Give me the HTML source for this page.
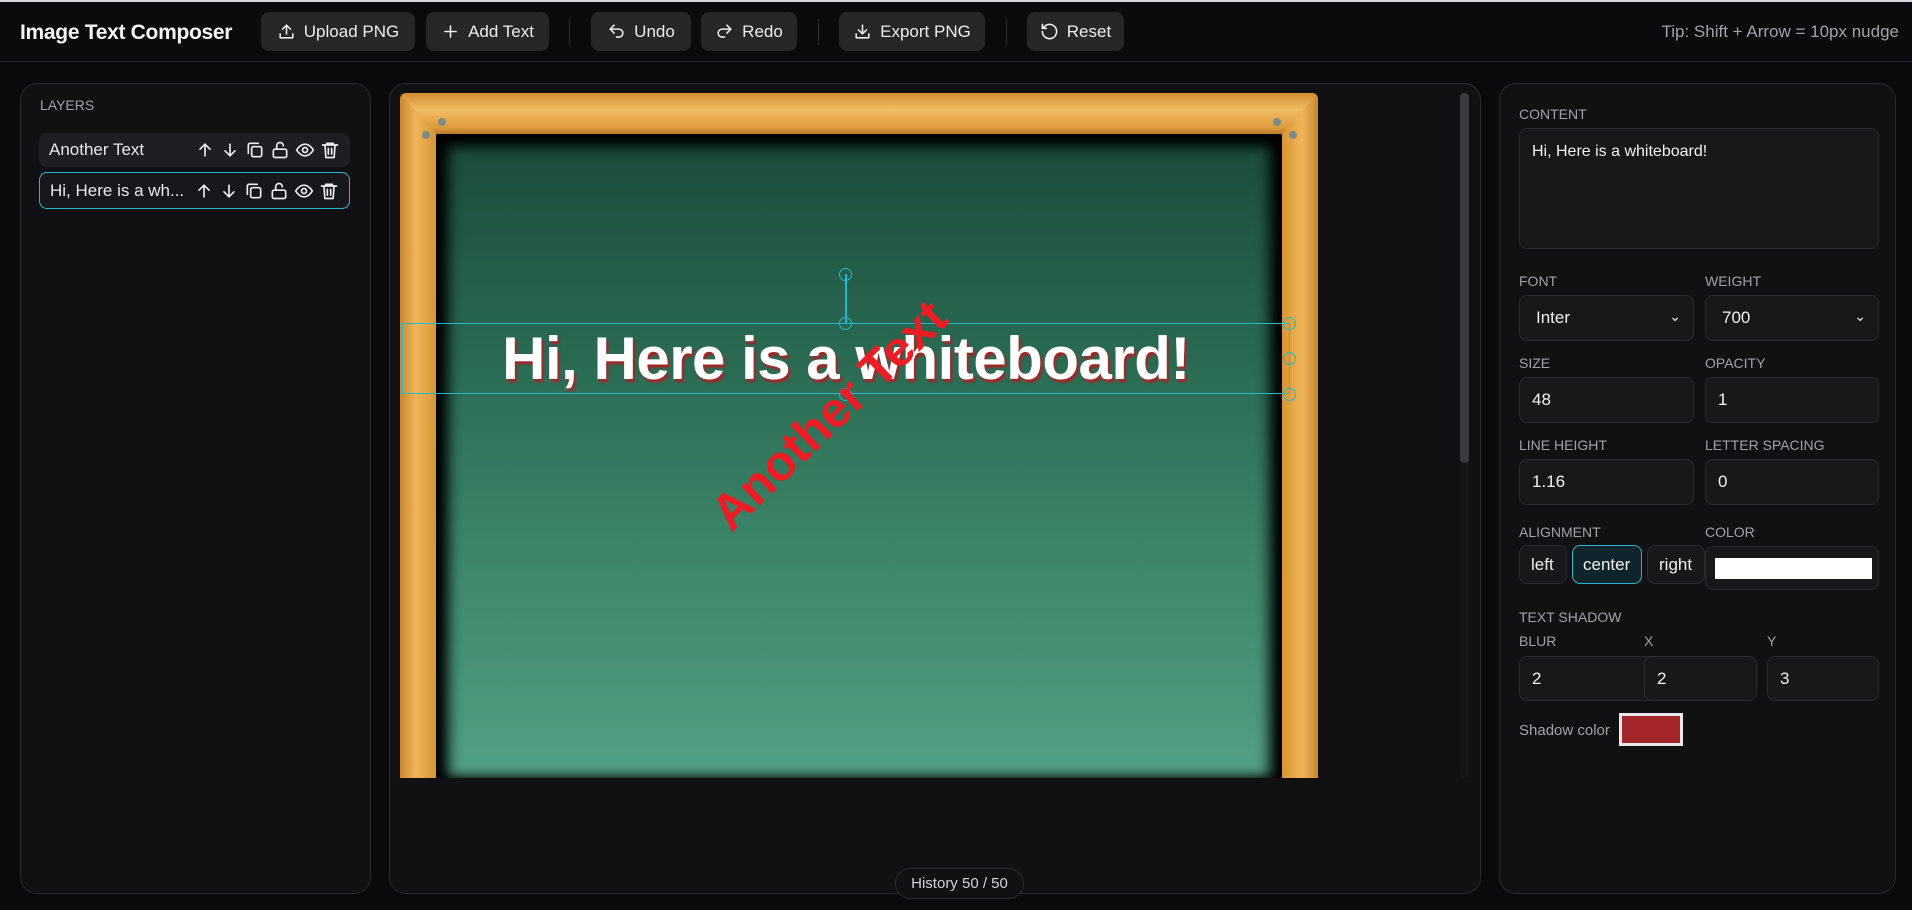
<!DOCTYPE html>
<html><head><meta charset="utf-8">
<style>
*{box-sizing:border-box;margin:0;padding:0}
body{width:1912px;height:910px;background:#0a0a0c;font-family:"Liberation Sans",sans-serif;color:#e8e8ea;position:relative;overflow:hidden}
.abs{position:absolute}
.topline{left:0;top:0;width:1912px;height:2px;background:#d8dadd}
.hdr{left:0;top:2px;width:1912px;height:60px;border-bottom:1px solid #26262a;background:#0b0b0d}
.title{left:20px;top:21px;font-size:21px;font-weight:bold;color:#f4f4f5;letter-spacing:-0.3px}
.btn{top:12px;height:39px;background:#27272a;border-radius:8px;color:#ececee;font-size:17px;display:flex;align-items:center;justify-content:center;gap:8px}
.btn svg{width:19px;height:19px;stroke:#ececee;fill:none;stroke-width:2;stroke-linecap:round;stroke-linejoin:round}
.sep{top:19px;width:1px;height:26px;background:#2e2e33}
.tip{right:13px;top:22px;font-size:17px;color:#a1a1aa}
.panel{top:83px;height:811px;background:#111114;border:1px solid #2a2a2f;border-radius:17px}
.lbl{font-size:14px;color:#a1a1aa;text-transform:uppercase}
.row{left:39px;width:311px;height:34px;background:#1f1f23;border-radius:8px;font-size:17px;display:flex;align-items:center;padding-left:10px}
.row .ic{position:absolute;right:10px;top:0;height:100%;display:flex;align-items:center;gap:5px}
.row svg{width:20px;height:20px;stroke:#ececee;fill:none;stroke-width:2;stroke-linecap:round;stroke-linejoin:round}
.inp{background:#18181b;border:1px solid #2c2c31;border-radius:8px;font-size:17px;color:#f0f0f2;display:flex;align-items:center;padding-left:12px}
.board{left:400px;top:93px;width:918px;height:685px;overflow:hidden;border-radius:6px 6px 0 0;background:#000}
.frameL{left:0;top:0;width:36px;height:100%;background:linear-gradient(90deg,#c98830,#f0b458 45%,#d69535)}
.frameR{right:0;top:0;width:36px;height:100%;background:linear-gradient(90deg,#d69535,#f0b458 55%,#c98830)}
.frameT{left:0;top:0;width:100%;height:41px;background:linear-gradient(180deg,#d08d2f,#f3bc62 40%,#dc9a3c 85%,#b87a28);clip-path:polygon(0 0,100% 0,calc(100% - 36px) 100%,36px 100%)}
.green{left:36px;top:41px;right:36px;bottom:0;background:linear-gradient(180deg,#1b4b3a 0%,#2a6a53 35%,#3d8669 65%,#52a083 100%);box-shadow:inset 0 14px 14px -2px #000,inset 14px 0 14px -2px #000,inset -14px 0 14px -2px #000}
.bolt{width:8px;height:8px;border-radius:50%;background:#7d8a86}
</style></head><body>
<div class="abs topline"></div>
<div class="abs hdr"></div>
<div class="abs title">Image Text Composer</div>

<div class="abs btn" style="left:261px;width:154px"><svg viewBox="0 0 24 24"><path d="M12 15V4M7 9l5-5 5 5M4 15v4a1 1 0 0 0 1 1h14a1 1 0 0 0 1-1v-4"/></svg>Upload PNG</div>
<div class="abs btn" style="left:426px;width:123px"><svg viewBox="0 0 24 24"><path d="M12 5v14M5 12h14"/></svg>Add Text</div>
<div class="abs sep" style="left:569px"></div>
<div class="abs btn" style="left:591px;width:100px"><svg viewBox="0 0 24 24"><path d="M9 14L4 9l5-5"/><path d="M4 9h11a5 5 0 0 1 5 5v0a5 5 0 0 1-5 5h-3"/></svg>Undo</div>
<div class="abs btn" style="left:701px;width:96px"><svg viewBox="0 0 24 24"><path d="M15 14l5-5-5-5"/><path d="M20 9H9a5 5 0 0 0-5 5v0a5 5 0 0 0 5 5h3"/></svg>Redo</div>
<div class="abs sep" style="left:818px"></div>
<div class="abs btn" style="left:839px;width:146px"><svg viewBox="0 0 24 24"><path d="M12 4v11M7 10l5 5 5-5M4 15v4a1 1 0 0 0 1 1h14a1 1 0 0 0 1-1v-4"/></svg>Export PNG</div>
<div class="abs sep" style="left:1006px"></div>
<div class="abs btn" style="left:1027px;width:97px"><svg viewBox="0 0 24 24"><path d="M3 12a9 9 0 1 0 3-6.7L3 8"/><path d="M3 3v5h5"/></svg>Reset</div>
<div class="abs tip">Tip: Shift + Arrow = 10px nudge</div>

<div class="abs panel" style="left:20px;width:351px"></div>
<div class="abs lbl" style="left:40px;top:97px">Layers</div>
<div class="abs row" style="top:133px">Another Text<div class="ic">
<svg viewBox="0 0 24 24"><path d="M12 19V5M6 11l6-6 6 6"/></svg><svg viewBox="0 0 24 24"><path d="M12 5v14M6 13l6 6 6-6"/></svg><svg viewBox="0 0 24 24"><rect x="8" y="8" width="12" height="12" rx="2"/><path d="M4 16V6a2 2 0 0 1 2-2h10"/></svg><svg viewBox="0 0 24 24"><rect x="4" y="11" width="16" height="10" rx="2"/><path d="M8 11V7a4 4 0 0 1 8 0"/></svg><svg viewBox="0 0 24 24"><path d="M2 12s4-7 10-7 10 7 10 7-4 7-10 7S2 12 2 12z"/><circle cx="12" cy="12" r="3"/></svg><svg viewBox="0 0 24 24"><path d="M3 6h18M8 6V4h8v2M6 6l1 15h10l1-15M10 10v7M14 10v7"/></svg></div></div>
<div class="abs row" style="top:172px;height:37px;border:1.5px solid #22b8cf;background:#18181c">Hi, Here is a wh...<div class="ic">
<svg viewBox="0 0 24 24"><path d="M12 19V5M6 11l6-6 6 6"/></svg><svg viewBox="0 0 24 24"><path d="M12 5v14M6 13l6 6 6-6"/></svg><svg viewBox="0 0 24 24"><rect x="8" y="8" width="12" height="12" rx="2"/><path d="M4 16V6a2 2 0 0 1 2-2h10"/></svg><svg viewBox="0 0 24 24"><rect x="4" y="11" width="16" height="10" rx="2"/><path d="M8 11V7a4 4 0 0 1 8 0"/></svg><svg viewBox="0 0 24 24"><path d="M2 12s4-7 10-7 10 7 10 7-4 7-10 7S2 12 2 12z"/><circle cx="12" cy="12" r="3"/></svg><svg viewBox="0 0 24 24"><path d="M3 6h18M8 6V4h8v2M6 6l1 15h10l1-15M10 10v7M14 10v7"/></svg></div></div>

<div class="abs panel" style="left:389px;width:1092px"></div>
<div class="abs" style="left:1460px;top:93px;width:9px;height:685px;background:#16161a;border-radius:4px"></div>
<div class="abs" style="left:1460px;top:93px;width:9px;height:370px;background:#3a3a40;border-radius:4px"></div>
<div class="abs board">
 <div class="abs green"></div>
 <div class="abs frameL"></div>
 <div class="abs frameR"></div>
 <div class="abs frameT"></div>
 <div class="abs bolt" style="left:38px;top:25px"></div>
 <div class="abs bolt" style="left:22px;top:38px"></div>
 <div class="abs bolt" style="left:873px;top:25px"></div>
 <div class="abs bolt" style="left:889px;top:38px"></div>
 <div class="abs" style="left:2px;top:230px;width:888px;height:71px;border:1.5px solid #22b8cf"></div>
 <div class="abs" style="left:445px;top:181px;width:1.5px;height:49px;background:#22b8cf"></div>
 <div class="abs" style="left:439px;top:175px;width:13px;height:13px;border:1.5px solid #22b8cf;border-radius:50%"></div>
 <div class="abs" style="left:439px;top:224px;width:13px;height:13px;border:1.5px solid #22b8cf;border-radius:50%"></div>
 <div class="abs" style="left:439px;top:295px;width:13px;height:13px;border:1.5px solid #22b8cf;border-radius:50%"></div>
 <div class="abs" style="left:883px;top:224px;width:13px;height:13px;border:1.5px solid #22b8cf;border-radius:50%"></div>
 <div class="abs" style="left:883px;top:259px;width:13px;height:13px;border:1.5px solid #22b8cf;border-radius:50%"></div>
 <div class="abs" style="left:883px;top:295px;width:13px;height:13px;border:1.5px solid #22b8cf;border-radius:50%"></div>
 <div class="abs" style="left:-30px;top:230px;width:952px;text-align:center;font-size:60px;font-weight:bold;color:#fff;text-shadow:2px 3px 2px #a32626;line-height:71px;letter-spacing:-0.5px">Hi, Here is a whiteboard!</div>
 <div class="abs" style="left:229px;top:294px;width:400px;text-align:center;font-size:50px;font-weight:bold;color:#ee1c24;transform:rotate(-44deg);line-height:56px">Another Text</div>
</div>
<div class="abs" style="left:895px;top:868px;width:129px;height:31px;border:1px solid #2a2a2f;background:#111114;border-radius:16px;font-size:15px;color:#d4d4d8;text-align:center;line-height:29px">History 50 / 50</div>

<div class="abs panel" style="left:1499px;width:397px"></div>
<div class="abs lbl" style="left:1519px;top:106px">Content</div>
<div class="abs inp" style="left:1519px;top:128px;width:360px;height:121px;align-items:flex-start;padding-top:14px;font-size:16px">Hi, Here is a whiteboard!</div>
<div class="abs lbl" style="left:1519px;top:273px">Font</div>
<div class="abs lbl" style="left:1705px;top:273px">Weight</div>
<div class="abs inp" style="left:1519px;top:295px;width:175px;height:46px;padding-left:16px">Inter<span style="position:absolute;right:12px;top:12px;font-size:14px">&#8964;</span></div>
<div class="abs inp" style="left:1705px;top:295px;width:174px;height:46px;padding-left:16px">700<span style="position:absolute;right:12px;top:12px;font-size:14px">&#8964;</span></div>
<div class="abs lbl" style="left:1519px;top:355px">Size</div>
<div class="abs lbl" style="left:1705px;top:355px">Opacity</div>
<div class="abs inp" style="left:1519px;top:377px;width:175px;height:46px">48</div>
<div class="abs inp" style="left:1705px;top:377px;width:174px;height:46px">1</div>
<div class="abs lbl" style="left:1519px;top:437px">Line Height</div>
<div class="abs lbl" style="left:1705px;top:437px">Letter Spacing</div>
<div class="abs inp" style="left:1519px;top:459px;width:175px;height:46px">1.16</div>
<div class="abs inp" style="left:1705px;top:459px;width:174px;height:46px">0</div>
<div class="abs lbl" style="left:1519px;top:524px">Alignment</div>
<div class="abs lbl" style="left:1705px;top:524px">Color</div>
<div class="abs inp" style="left:1519px;top:545px;width:48px;height:39px;padding-left:11px">left</div>
<div class="abs inp" style="left:1572px;top:545px;width:70px;height:39px;padding-left:10px;border:1.5px solid #22b8cf;background:#10252b">center</div>
<div class="abs inp" style="left:1647px;top:545px;width:58px;height:39px;padding-left:11px">right</div>
<div class="abs inp" style="left:1705px;top:546px;width:174px;height:44px;padding:0"><div style="margin-left:9px;width:157px;height:21px;background:#fff"></div></div>
<div class="abs lbl" style="left:1519px;top:609px">Text Shadow</div>
<div class="abs lbl" style="left:1519px;top:633px">Blur</div>
<div class="abs lbl" style="left:1644px;top:633px">X</div>
<div class="abs lbl" style="left:1767px;top:633px">Y</div>
<div class="abs inp" style="left:1519px;top:656px;width:147px;height:45px">2</div>
<div class="abs inp" style="left:1644px;top:656px;width:113px;height:45px">2</div>
<div class="abs inp" style="left:1767px;top:656px;width:112px;height:45px">3</div>
<div class="abs" style="left:1519px;top:722px;font-size:15px;color:#a1a1aa">Shadow color</div>
<div class="abs" style="left:1619px;top:713px;width:64px;height:33px;border:3px solid #e8e8ea;background:#a2262a"></div>
</body></html>
